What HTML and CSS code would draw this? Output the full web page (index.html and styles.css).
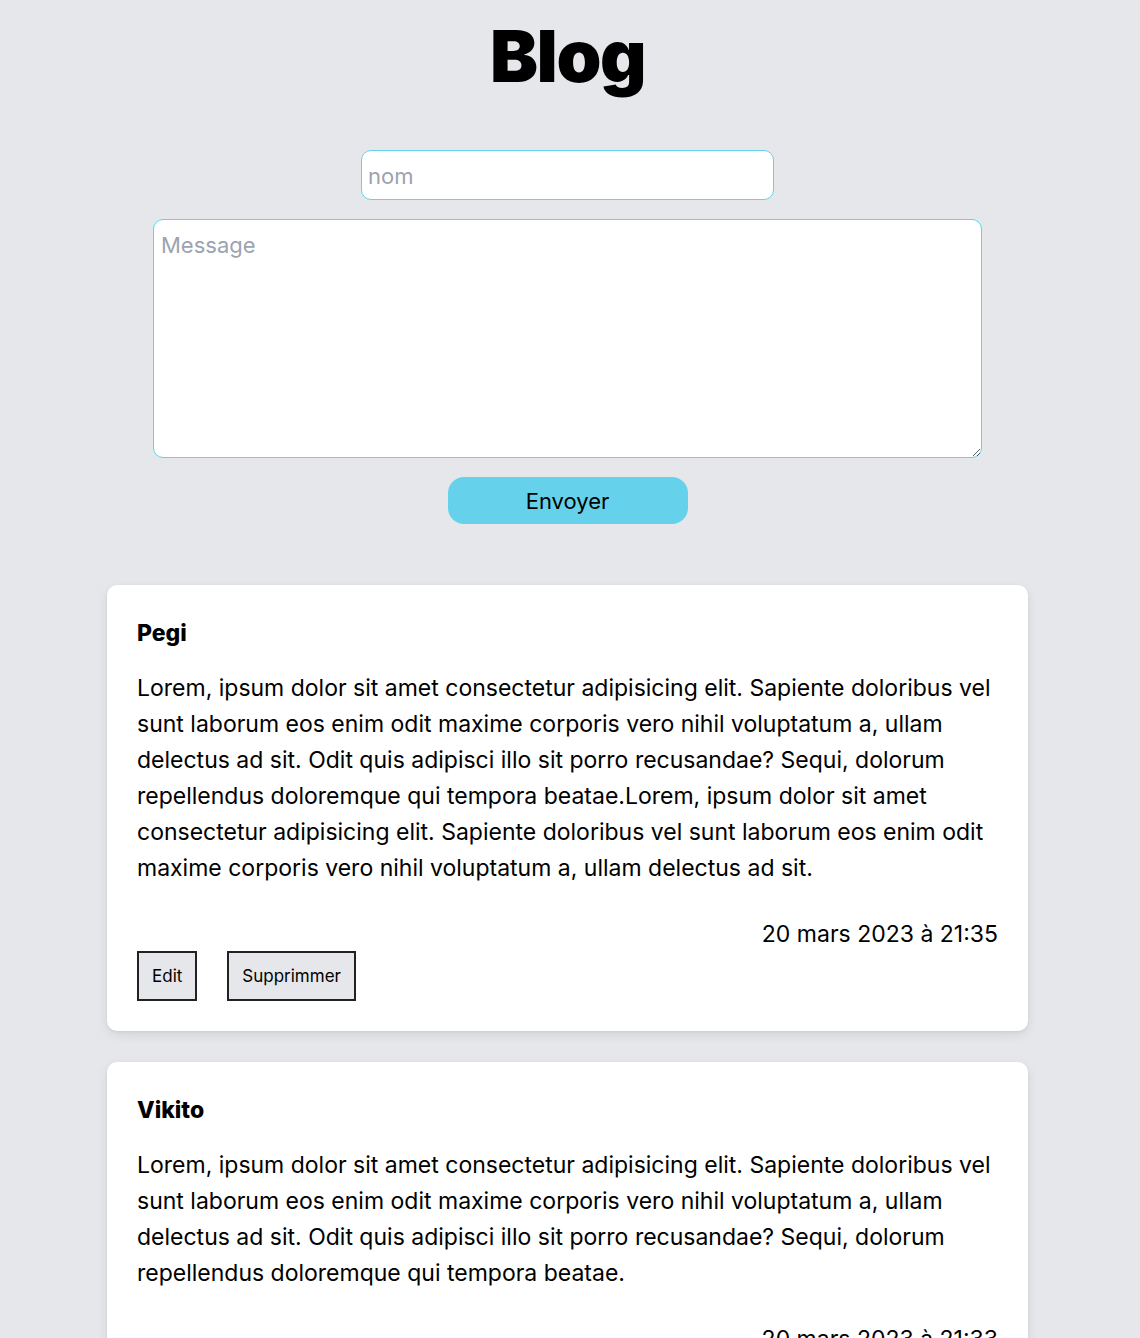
FILE: index.html
```html
<html lang="fr">
<head>
    <meta charset="UTF-8">
    <meta name="viewport" content="width=device-width, initial-scale=1.0">
    <title>Blog</title>
    <link rel="stylesheet" href="styles.css">
</head>
<body>
    <main>
        <h1>Blog</h1>
        <form id="postForm">
            <input type="text" placeholder="nom" id="author" name="author">
            <textarea placeholder="Message" id="message" name="message"></textarea>
            <button type="submit" class="sendbtn">Envoyer</button>
        </form>

        <section id="posts">
            <article class="post">
                <h2>Pegi</h2>
                <p class="content">Lorem, ipsum dolor sit amet consectetur adipisicing elit. Sapiente doloribus vel sunt laborum eos enim odit maxime corporis vero nihil voluptatum a, ullam delectus ad sit. Odit quis adipisci illo sit porro recusandae? Sequi, dolorum repellendus doloremque qui tempora beatae.Lorem, ipsum dolor sit amet consectetur adipisicing elit. Sapiente doloribus vel sunt laborum eos enim odit maxime corporis vero nihil voluptatum a, ullam delectus ad sit.</p>
                <p class="date">20 mars 2023 à 21:35</p>
                <div class="actions">
                    <button class="postbtn">Edit</button>
                    <button class="postbtn">Supprimmer</button>
                </div>
            </article>
            <article class="post">
                <h2>Vikito</h2>
                <p class="content">Lorem, ipsum dolor sit amet consectetur adipisicing elit. Sapiente doloribus vel sunt laborum eos enim odit maxime corporis vero nihil voluptatum a, ullam delectus ad sit. Odit quis adipisci illo sit porro recusandae? Sequi, dolorum repellendus doloremque qui tempora beatae.</p>
                <p class="date">20 mars 2023 à 21:33</p>
                <div class="actions">
                    <button class="postbtn">Edit</button>
                    <button class="postbtn">Supprimmer</button>
                </div>
            </article>
        </section>
    </main>
</body>
</html>
```

FILE: styles.css
```css
/* Reset some default styles */
body, h1, h2, p, input, textarea, button {
    margin: 0;
    padding: 0;
}
body {
    font-family: Inter, "Noto Sans", sans-serif;
    background-color: #e5e7eb;
    color: #000;
    padding-right: 5px;
}
main {
    display: flex;
    flex-direction: column;
    align-items: center;
}
h1 {
    font-size: 72px;
    font-weight: 900;
    line-height: 1;
    letter-spacing: -1.5px;
    margin-top: 20px;
    margin-bottom: 58px;
}
form {
    display: flex;
    flex-direction: column;
    align-items: center;
    width: 829px;
}
input, textarea {
    font-family: Inter, "Noto Sans", sans-serif;
    font-size: 22px;
    color: #000;
    background-color: #fff;
    border: 1.5px solid #62d2ee;
    border-radius: 10px;
    outline: none;
    box-sizing: border-box;
}
input::placeholder, textarea::placeholder {
    color: #9ca3af;
}
input {
    width: 413px;
    height: 50px;
    padding: 2px 6px 0;
    margin-bottom: 19px;
}
textarea {
    width: 829px;
    height: 239px;
    padding: 12px 7px;
    resize: vertical;
}
button.sendbtn {
    font-family: Inter, "Noto Sans", sans-serif;
    width: 240px;
    height: 47px;
    margin-top: 19px;
    font-size: 22px;
    color: #000;
    background-color: #66d1ea;
    border: none;
    border-radius: 16px;
    cursor: pointer;
}
#posts {
    display: flex;
    flex-direction: column;
    gap: 31px;
    margin-top: 45px;
    width: 921px;
}
.post {
    background-color: #fff;
    border-radius: 10px;
    padding: 30px;
    box-shadow: 0 4px 12px rgba(0, 0, 0, 0.08), 0 1px 3px rgba(0, 0, 0, 0.06);
}
.post h2 {
    font-size: 23px;
    font-weight: 800;
    line-height: 36px;
    margin-bottom: 19px;
}
.post p {
    font-size: 23px;
    line-height: 36px;
}
.post .date {
    text-align: right;
    margin-top: 30px;
}
.actions {
    display: flex;
    gap: 30px;
    margin-top: -1px;
}
button.postbtn {
    font-family: Inter, "Noto Sans", sans-serif;
    font-size: 17px;
    height: 50px;
    padding: 0 13px;
    background-color: #e5e7eb;
    border: 2px solid #222;
    cursor: pointer;
}
```
